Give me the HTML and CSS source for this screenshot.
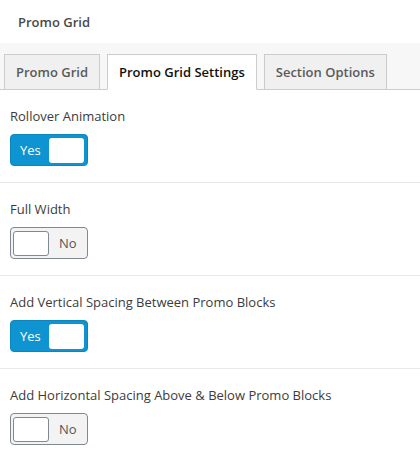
FILE: index.html
```html
<!DOCTYPE html>
<html>
<head>
<meta charset="utf-8">
<link rel="stylesheet" href="styles.css">
</head>
<body>
<div class="panel">
  <div class="panel-title">Promo Grid</div>
  <div class="tabbar">
    <div class="tab">Promo Grid</div>
    <div class="tab active">Promo Grid Settings</div>
    <div class="tab">Section Options</div>
  </div>
  <div class="section">
    <div class="label">Rollover Animation</div>
    <div class="toggle on"><span class="toggle-text">Yes</span><span class="knob"></span></div>
  </div>
  <div class="section">
    <div class="label">Full Width</div>
    <div class="toggle off"><span class="knob"></span><span class="toggle-text">No</span></div>
  </div>
  <div class="section">
    <div class="label">Add Vertical Spacing Between Promo Blocks</div>
    <div class="toggle on"><span class="toggle-text">Yes</span><span class="knob"></span></div>
  </div>
  <div class="section last">
    <div class="label">Add Horizontal Spacing Above &amp; Below Promo Blocks</div>
    <div class="toggle off"><span class="knob"></span><span class="toggle-text">No</span></div>
  </div>
</div>
</body>
</html>
```
FILE: styles.css
```css
html, body {
  margin: 0;
  padding: 0;
  background: #ffffff;
}
body {
  font-family: "Open Sans", "Noto Sans", sans-serif;
  font-size: 13px;
  color: #333;
}
.panel-title {
  height: 43px;
  box-sizing: border-box;
  padding: 12px 18px 0;
  line-height: 20px;
  font-weight: 600;
  color: #4a4a4a;
}
.tabbar {
  display: flex;
  align-items: flex-end;
  gap: 7px;
  height: 47px;
  box-sizing: border-box;
  padding: 0 4px;
  background: #f7f7f7;
  border-bottom: 1px solid #ccc;
}
.tab {
  height: 36px;
  box-sizing: border-box;
  margin-bottom: -1px;
  padding: 0 11px;
  display: flex;
  align-items: center;
  font-weight: 600;
  color: #5a5a5a;
  background: #f0f0f0;
  border: 1px solid #ccc;
}
.tab.active {
  background: #fff;
  color: #111;
  border-bottom-color: #fff;
}
.section {
  padding: 16px 10px 16px;
  border-bottom: 1px solid #e8e8e8;
}
.section:first-of-type {
  padding-top: 17px;
}
.section.last {
  border-bottom: none;
}
.label {
  line-height: 20px;
  margin-bottom: 8px;
  color: #3c3c3c;
}
.toggle {
  width: 78px;
  height: 32px;
  box-sizing: border-box;
  border-radius: 4px;
  display: flex;
  align-items: center;
  padding: 0 3px;
}
.toggle.on {
  background: #0f94d2;
  border: 1px solid #0c86be;
  justify-content: space-between;
  padding-left: 9px;
}
.toggle.on .toggle-text {
  color: #fff;
}
.toggle.off {
  background: #f3f3f3;
  border: 1px solid #7e8993;
  padding-left: 2px;
}
.toggle.off .toggle-text {
  color: #555;
  margin-left: 10px;
}
.knob {
  width: 35px;
  height: 25px;
  box-sizing: border-box;
  background: #fff;
  border-radius: 3px;
}
.toggle.off .knob {
  width: 36px;
  border: 1px solid #7e8993;
}
```
